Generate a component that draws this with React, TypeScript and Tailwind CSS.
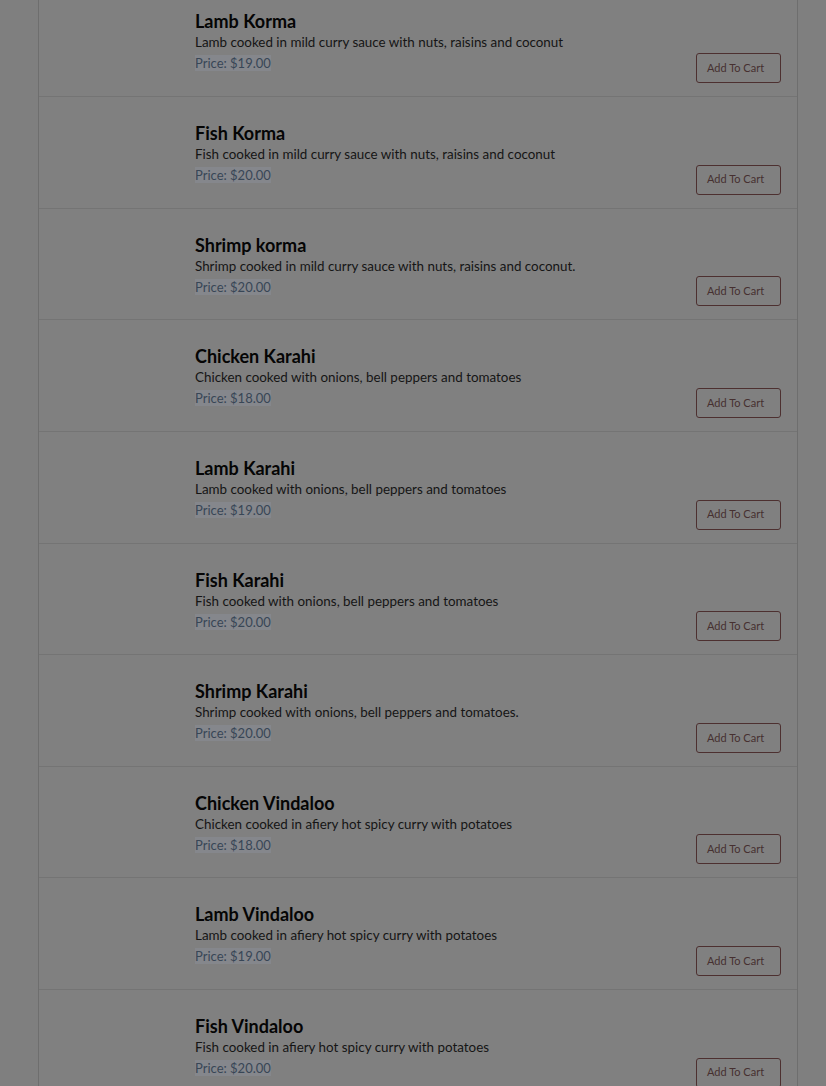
import React from "react";

const items = [
  { name: "Lamb Korma", desc: "Lamb cooked in mild curry sauce with nuts, raisins and coconut", price: "$19.00" },
  { name: "Fish Korma", desc: "Fish cooked in mild curry sauce with nuts, raisins and coconut", price: "$20.00" },
  { name: "Shrimp korma", desc: "Shrimp cooked in mild curry sauce with nuts, raisins and coconut.", price: "$20.00" },
  { name: "Chicken Karahi", desc: "Chicken cooked with onions, bell peppers and tomatoes", price: "$18.00" },
  { name: "Lamb Karahi", desc: "Lamb cooked with onions, bell peppers and tomatoes", price: "$19.00" },
  { name: "Fish Karahi", desc: "Fish cooked with onions, bell peppers and tomatoes", price: "$20.00" },
  { name: "Shrimp Karahi", desc: "Shrimp cooked with onions, bell peppers and tomatoes.", price: "$20.00" },
  { name: "Chicken Vindaloo", desc: "Chicken cooked in afiery hot spicy curry with potatoes", price: "$18.00" },
  { name: "Lamb Vindaloo", desc: "Lamb cooked in afiery hot spicy curry with potatoes", price: "$19.00" },
  { name: "Fish Vindaloo", desc: "Fish cooked in afiery hot spicy curry with potatoes", price: "$20.00" },
];

export default function App() {
  return (
    <div className="h-[1086px] w-full overflow-hidden bg-[#7f7f7f]" style={{ fontFamily: "Lato, 'Noto Sans', sans-serif" }}>
      <div className="ml-[38px] w-[760px] -mt-[14.6px] border-x border-[#6e6e6e] bg-[#808080]">
        {items.map((it) => (
          <div key={it.name} className="flex h-[111.625px] box-border border-b border-[#747474]">
            <div className="w-[156px] shrink-0" />
            <div className="flex-1 pt-[25px]">
              <div className="text-[18px] leading-[22px] font-bold text-[#050505]">{it.name}</div>
              <div className="text-[13.4px] leading-[20px] text-[#151515]">{it.desc}</div>
              <div className="text-[13px] leading-[22px] text-[#384656]">
                <span className="bg-[#85878c]">Price: {it.price}</span>
              </div>
            </div>
            <div className="flex items-end pb-[13px] pr-[16px]">
              <button className="h-[30px] w-[85px] rounded-[3px] border border-[#4d3030] pl-[10px] text-left text-[11px] text-[#463030]">
                Add To Cart
              </button>
            </div>
          </div>
        ))}
      </div>
    </div>
  );
}
